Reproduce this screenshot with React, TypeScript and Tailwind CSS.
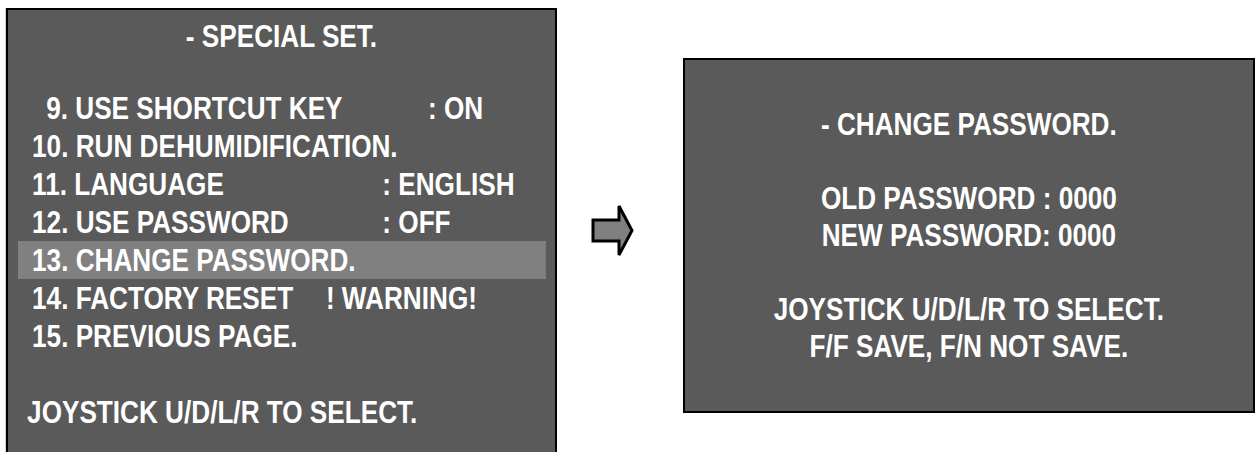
const font = { fontFamily: "'Liberation Sans', Arial, sans-serif" }

type Row = { label: string; value?: string; labelW?: string; indent?: boolean; active?: boolean }

// widths below are in unscaled units (the text block is squeezed to 83% to mimic a narrow face)
const rows: Row[] = [
  { label: '9. USE SHORTCUT KEY', value: ': ON', labelW: 'w-[477px]', indent: true },
  { label: '10. RUN DEHUMIDIFICATION.' },
  { label: '11. LANGUAGE', value: ': ENGLISH', labelW: 'w-[422px]' },
  { label: '12. USE PASSWORD', value: ': OFF', labelW: 'w-[422px]' },
  { label: '13. CHANGE PASSWORD.', active: true },
  { label: '14. FACTORY RESET', value: '! WARNING!', labelW: 'w-[354px]' },
  { label: '15. PREVIOUS PAGE.' },
]

function Arrow() {
  return (
    <svg width="44" height="56" viewBox="0 0 44 56">
      <polygon
        points="3,17 29,17 29,3 42,27.5 29,52 29,38 3,38"
        fill="#808080"
        stroke="#000"
        strokeWidth="3"
        strokeLinejoin="miter"
      />
    </svg>
  )
}

export default function App() {
  return (
    <div
      className="w-[1256px] h-[452px] overflow-hidden bg-white flex items-start text-white font-bold text-[31.5px] leading-[38px] whitespace-pre"
      style={font}
    >
      {/* ── Special set menu ─────────────────────────── */}
      <div className="ml-[6px] mt-[8px] w-[551px] h-[460px] shrink-0 overflow-hidden bg-[#5a5a5a] border-2 border-black shadow-[-1px_0_0_#d4d4d4]">
        <div className="w-[659px] pt-[7px] origin-top-left scale-x-[0.83]">
          <div className="text-center">- SPECIAL SET.</div>

          <div className="mt-[34px] ml-[12px] mr-[11px]">
            {rows.map((r) => (
              <div
                key={r.label}
                className={`h-[38px] flex px-[17px] ${r.active ? 'bg-[#808080]' : ''}`}
              >
                <span className={`${r.indent ? 'pl-[17px]' : ''} ${r.labelW ?? ''} shrink-0`}>{r.label}</span>
                {r.value && <span>{r.value}</span>}
              </div>
            ))}
          </div>

          <div className="mt-[38px] pl-[23px]">JOYSTICK U/D/L/R TO SELECT.</div>
        </div>
      </div>

      {/* ── Arrow ────────────────────────────────────── */}
      <div className="w-[126px] shrink-0 pl-[33px] pt-[203px]">
        <Arrow />
      </div>

      {/* ── Change password ──────────────────────────── */}
      <div className="mt-[58px] w-[572px] h-[355px] shrink-0 overflow-hidden bg-[#5a5a5a] border-2 border-black">
        <div className="w-[684px] h-full origin-left scale-x-[0.83] flex flex-col justify-center items-center leading-[37px]">
          <div>- CHANGE PASSWORD.</div>
          <div className="h-[37px]" />
          <div>OLD PASSWORD : 0000</div>
          <div>NEW PASSWORD: 0000</div>
          <div className="h-[37px]" />
          <div>JOYSTICK U/D/L/R TO SELECT.</div>
          <div>F/F SAVE, F/N NOT SAVE.</div>
        </div>
      </div>
    </div>
  )
}
